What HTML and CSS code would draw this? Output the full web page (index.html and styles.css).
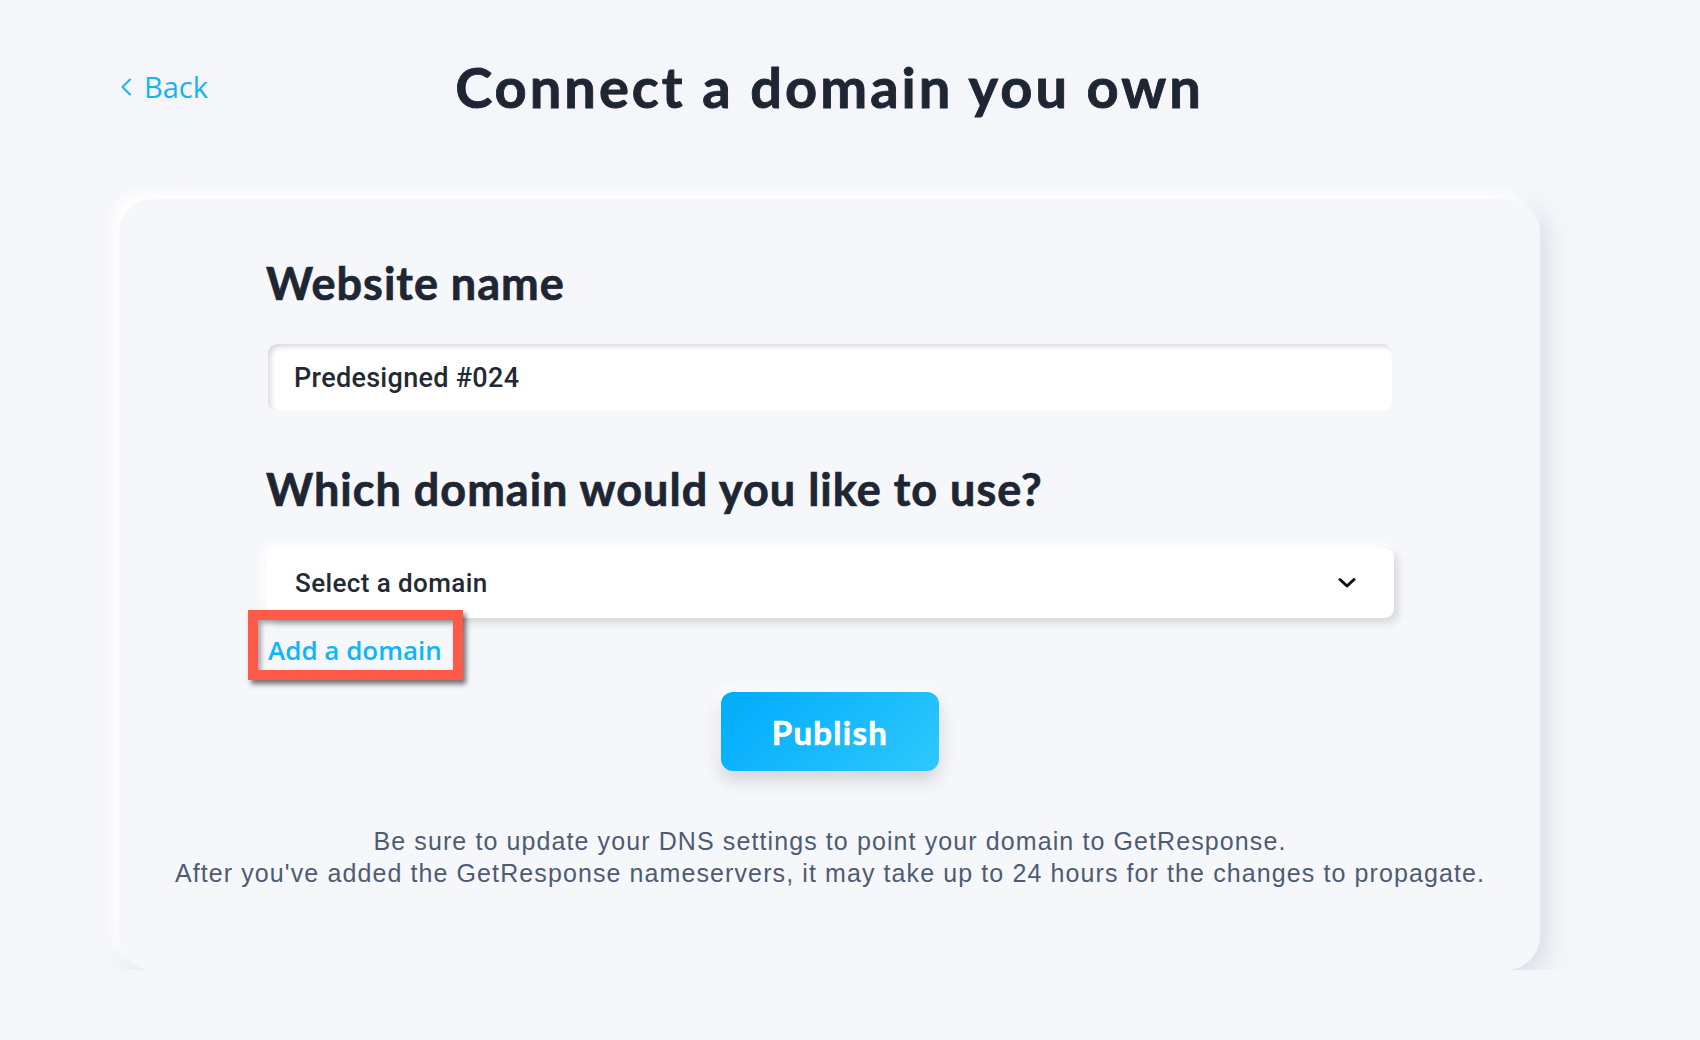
FILE: index.html
```html
<!DOCTYPE html>
<html lang="en">
<head>
    <meta charset="UTF-8">
    <meta name="viewport" content="width=device-width, initial-scale=1.0">
    <title>Connect a domain you own</title>
    <link rel="stylesheet" href="styles.css">
</head>
<body>
    <div class="page">
        <div class="header">
            <a href="#" class="back">
                <svg width="12" height="18" viewBox="0 0 12 18"><polyline points="10,1.5 2.5,9 10,16.5" fill="none" stroke="currentColor" stroke-width="2" stroke-linecap="round" stroke-linejoin="round"/></svg>
                <span>Back</span>
            </a>
            <h1 class="title">Connect a domain you own</h1>
        </div>

        <div class="card">
            <h2 class="label">Website name</h2>
            <div class="field">Predesigned #024</div>

            <h2 class="label label-second">Which domain would you like to use?</h2>
            <div class="select">
                <span>Select a domain</span>
                <svg width="18" height="12" viewBox="0 0 18 12"><polyline points="2,2.5 9,9 16,2.5" fill="none" stroke="#111" stroke-width="3" stroke-linecap="round" stroke-linejoin="round"/></svg>
            </div>

            <div class="add-row">
                <a href="#" class="add-link">Add a domain<span class="mark"></span></a>
            </div>

            <div class="actions">
                <button class="publish">Publish</button>
            </div>

            <p class="note">Be sure to update your DNS settings to point your domain to GetResponse.<br>After you've added the GetResponse nameservers, it may take up to 24 hours for the changes to propagate.</p>
        </div>
    </div>
</body>
</html>
```

FILE: styles.css
```css
body {
    margin: 0;
    background-color: #f5f6fa;
    font-family: Lato, "Open Sans", sans-serif;
    color: #1e2633;
}
.page {
    padding-top: 53px;
    padding-left: 119px;
    width: 1421px;
}
.header {
    display: grid;
    grid-template-columns: 1fr auto 1fr;
    align-items: center;
}
.back {
    justify-self: start;
    display: flex;
    align-items: center;
    gap: 12px;
    margin-left: 1px;
    color: #16b4f7;
    text-decoration: none;
    font-family: "Open Sans", sans-serif;
    font-size: 29px;
}
.back svg {
    display: block;
}
.title {
    margin: 0;
    font-size: 56px;
    line-height: 67px;
    font-weight: 700;
    letter-spacing: 3px;
    -webkit-text-stroke: 0.9px #1e2633;
}
.card {
    margin-top: 79px;
    padding: 57px 146px 81px 147px;
    border-radius: 34px;
    background-color: #f6f7fb;
    box-shadow: -8px -8px 16px #ffffff, 8px 8px 22px rgba(160, 166, 184, 0.3);
}
.label {
    margin: 0;
    font-size: 45px;
    line-height: 54px;
    font-weight: 700;
    letter-spacing: 1px;
    -webkit-text-stroke: 0.7px #1e2633;
}
.label-second {
    margin-top: 51px;
}
.field {
    margin-top: 34px;
    margin-left: 2px;
    margin-right: 2px;
    height: 67px;
    padding-left: 26px;
    display: flex;
    align-items: center;
    background: #fff;
    border-radius: 9px;
    box-shadow: inset 3px 3px 5px rgba(0, 0, 0, 0.14);
    font-family: Roboto, sans-serif;
    font-weight: 500;
    font-size: 27px;
    letter-spacing: 0.3px;
    color: #232a35;
}
.select {
    margin-top: 32px;
    height: 70px;
    padding: 0 38px 0 29px;
    display: flex;
    align-items: center;
    justify-content: space-between;
    background: #fff;
    border-radius: 9px;
    box-shadow: 4px 5px 10px rgba(0, 0, 0, 0.13), -4px -4px 10px #ffffff;
    font-family: Roboto, sans-serif;
    font-weight: 500;
    font-size: 26px;
    letter-spacing: 0.4px;
    color: #232a35;
}
.add-row {
    margin-top: 14px;
}
.add-link {
    position: relative;
    display: inline-block;
    margin-left: 2px;
    font-family: "Open Sans", sans-serif;
    font-weight: 600;
    font-size: 26px;
    line-height: 36px;
    color: #0fb5fa;
    text-decoration: none;
}
.mark {
    position: absolute;
    left: -20px;
    top: -22px;
    width: 215px;
    height: 70px;
    box-sizing: border-box;
    border: 10px solid #fe5a4a;
    box-shadow: 3px 4px 5px rgba(0, 0, 0, 0.55), inset 3px 3px 5px rgba(0, 0, 0, 0.35);
}
.actions {
    margin-top: 24px;
    display: flex;
    justify-content: center;
}
.publish {
    width: 218px;
    height: 79px;
    border: none;
    border-radius: 12px;
    background: linear-gradient(135deg, #00abfc, #2ec8fd);
    box-shadow: 0 9px 18px rgba(0, 0, 0, 0.15), -4px -4px 10px #ffffff;
    color: #fff;
    font-family: Lato, sans-serif;
    font-weight: 700;
    font-size: 33px;
    letter-spacing: 1.3px;
    -webkit-text-stroke: 0.6px #ffffff;
}
.note {
    margin: 54px -140px 0 -140px;
    white-space: nowrap;
    text-align: center;
    font-family: "Liberation Sans", Arial, sans-serif;
    font-size: 25px;
    line-height: 32px;
    letter-spacing: 1.1px;
    color: #4d5c72;
}
```
